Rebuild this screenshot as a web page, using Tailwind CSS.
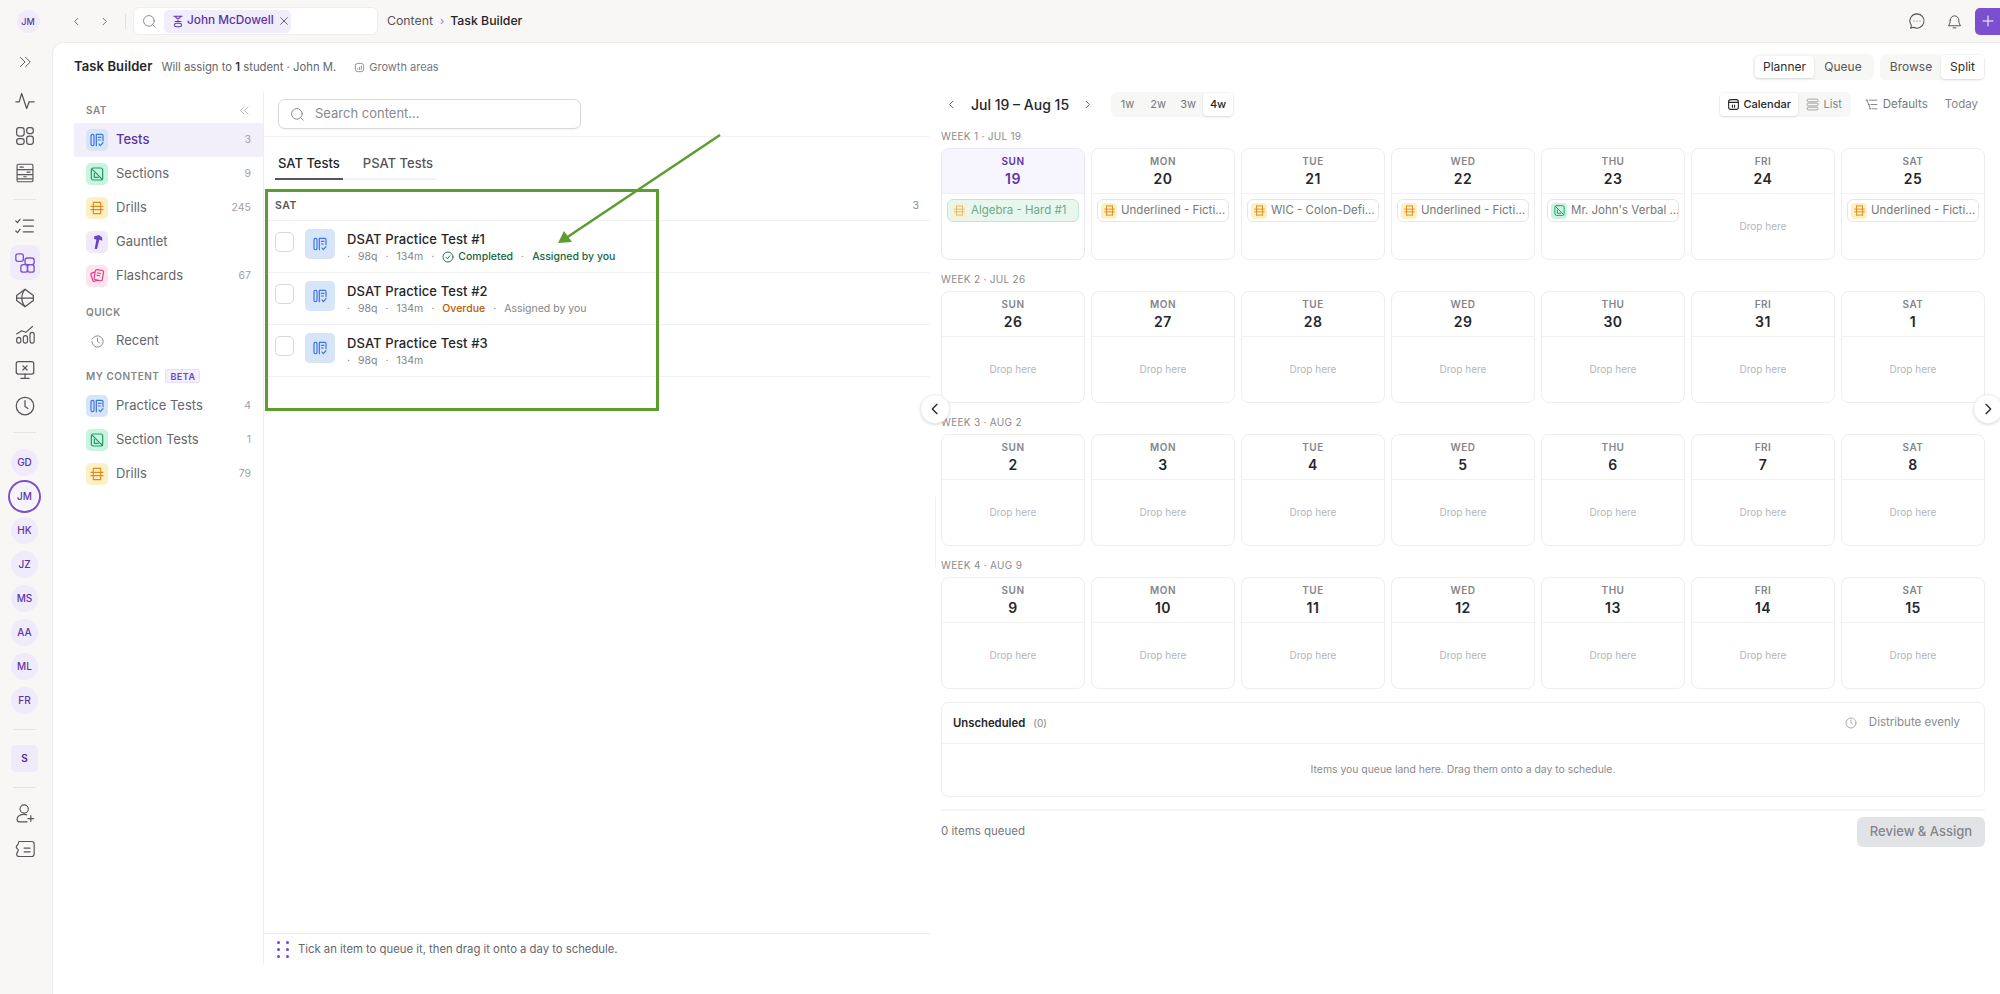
<!DOCTYPE html>
<html lang="en">
<head>
    <meta charset="UTF-8">
    <meta name="viewport" content="width=device-width, initial-scale=1.0">
    <title>Task Builder</title>
    <script src="https://cdn.jsdelivr.net/npm/@tailwindcss/browser@4"></script>
</head>
<body class="relative flex w-[2000px] h-[994px] overflow-hidden bg-[#f8f7f5] font-['Inter',sans-serif] text-[#1f1f22]">
    <!-- Icon sprites -->
    <svg class="hidden" xmlns="http://www.w3.org/2000/svg">
        <symbol id="i-tests" viewBox="0 0 24 24" fill="none" stroke="currentColor" stroke-width="1.8" stroke-linecap="round" stroke-linejoin="round">
            <rect x="3" y="3.5" width="4.5" height="17" rx="2.2"/>
            <path d="M11 20.5V3.5h8a2 2 0 0 1 2 2V13M14 8h4M14 12h3M15 18l2 2.5 4-4.5"/>
        </symbol>
        <symbol id="i-sections" viewBox="0 0 24 24" fill="none" stroke="currentColor" stroke-width="1.8" stroke-linecap="round" stroke-linejoin="round">
            <rect x="3.5" y="3" width="17" height="18" rx="3"/>
            <path d="M5 5l15 15M8 11v6h6"/>
        </symbol>
        <symbol id="i-drills" viewBox="0 0 24 24" fill="none" stroke="currentColor" stroke-width="1.7" stroke-linecap="round" stroke-linejoin="round">
            <path d="M6.500 3.500h11M6.500 20.500h11M6.500 3.500v17M17.500 3.500v17M3 9.500h18M3 14.500h18"/>
        </symbol>
        <symbol id="i-gauntlet" viewBox="0 0 24 24" fill="currentColor">
            <path d="M8 3.500l7-2 4.500 3.500.5 5-3-1-1.500-.5L12 22.500H8.500l2.500-14-3.500-1.500z"/>
        </symbol>
        <symbol id="i-cards" viewBox="0 0 24 24" fill="none" stroke="currentColor" stroke-width="1.7" stroke-linecap="round" stroke-linejoin="round">
            <path d="M8.500 6L4 7.700a2 2 0 0 0-1.200 2.500l3 8.500A2 2 0 0 0 8.300 20l5-1.800"/>
            <rect x="8.500" y="3" width="12.500" height="15.500" rx="2.500" transform="rotate(10 14.700 10.700)"/>
            <path d="M12.500 7.500l5 .8M12 11l4 .6"/>
        </symbol>
        <symbol id="i-search" viewBox="0 0 24 24" fill="none" stroke="currentColor" stroke-width="1.5" stroke-linecap="round">
            <circle cx="11" cy="11" r="8.500"/><path d="M17.500 17.500L21 21"/>
        </symbol>
        <symbol id="i-left" viewBox="0 0 24 24" fill="none" stroke="currentColor" stroke-width="2" stroke-linecap="round" stroke-linejoin="round"><path d="M15 5l-7 7 7 7"/></symbol>
        <symbol id="i-right" viewBox="0 0 24 24" fill="none" stroke="currentColor" stroke-width="2" stroke-linecap="round" stroke-linejoin="round"><path d="M9 5l7 7-7 7"/></symbol>
    </svg>

    <!-- Icon rail -->
    <aside class="flex flex-col items-center w-[52px] shrink-0 pr-[3px] text-[#55555a]">
        <div class="mt-[10px] ml-[7px] flex items-center justify-center w-[23px] h-[23px] rounded-full bg-[#f0ebfa] text-[9px] font-medium text-[#5b34a8]">JM</div>
        <svg class="mt-[21px] w-[14px] h-[16px]" viewBox="0 0 24 24" fill="none" stroke="currentColor" stroke-width="1.6" stroke-linecap="round" stroke-linejoin="round"><path d="M4 4l8 8-8 8M13 4l8 8-8 8"/></svg>
        <svg class="mt-[19px] w-[24px] h-[24px] p-[2px]" viewBox="0 0 24 24" fill="none" stroke="currentColor" stroke-width="1.5" stroke-linecap="round" stroke-linejoin="round"><path d="M1 13h4l3-10 6 18 3-8h6"/></svg>
        <svg class="mt-[11px] w-[24px] h-[24px] p-[2px]" viewBox="0 0 24 24" fill="none" stroke="currentColor" stroke-width="1.5"><rect x="2" y="2" width="9" height="10" rx="3"/><rect x="14" y="2" width="8" height="7" rx="3"/><rect x="14" y="12" width="8" height="10" rx="3"/><rect x="2" y="15" width="9" height="7" rx="3"/></svg>
        <svg class="mt-[13px] w-[24px] h-[24px] p-[2px]" viewBox="0 0 24 24" fill="none" stroke="currentColor" stroke-width="1.4" stroke-linejoin="round"><rect x="2.500" y="1.500" width="19" height="21" rx="1.500"/><path d="M2.500 8h19M2.500 14h19M2.500 19h19M5.500 5h5M14 11h4.500M10 16.500h4"/></svg>
        <div class="mt-[14px] w-[23px] h-px bg-[#e6e4e1]"></div>
        <svg class="mt-[14px] w-[24px] h-[24px] p-[2px]" viewBox="0 0 24 24" fill="none" stroke="currentColor" stroke-width="1.5" stroke-linecap="round" stroke-linejoin="round"><path d="M1 6l2 2 3-4M1 18l2 2 3-4M10 5h12M10 12h12M10 19h12"/></svg>
        <div class="mt-[7px] flex items-center justify-center w-[30px] h-[35px] rounded-[8px] bg-[#f0ebfa] text-[#7c4fd0]">
            <svg class="w-[20px] h-[20px]" viewBox="0 0 24 24" fill="none" stroke="currentColor" stroke-width="1.6"><rect x="1" y="1" width="9" height="9" rx="2.500"/><rect x="12" y="6" width="11" height="8" rx="3"/><rect x="7" y="14" width="8" height="9" rx="3"/><rect x="15" y="14" width="8" height="9" rx="3"/></svg>
        </div>
        <svg class="mt-[6px] w-[24px] h-[24px] p-[2px]" viewBox="0 0 24 24" fill="none" stroke="currentColor" stroke-width="1.5" stroke-linecap="round"><path d="M12 1.500L22 9v6l-10 7.500L2 15V9z" stroke-linejoin="round"/><path d="M2 12h20M12 2c-5 5-5 15 0 20"/></svg>
        <svg class="mt-[12px] w-[24px] h-[24px] p-[2px]" viewBox="0 0 24 24" fill="none" stroke="currentColor" stroke-width="1.4" stroke-linecap="round" stroke-linejoin="round"><rect x="2" y="16" width="5" height="7" rx="2.500"/><rect x="10" y="14" width="5" height="9" rx="2.500"/><rect x="18" y="10" width="5" height="13" rx="2.500"/><path d="M2 12l6-4 5 2 8-7"/></svg>
        <svg class="mt-[12px] w-[24px] h-[24px] p-[2px]" viewBox="0 0 24 24" fill="none" stroke="currentColor" stroke-width="1.5" stroke-linecap="round" stroke-linejoin="round"><rect x="1.500" y="2" width="21" height="15" rx="2.500"/><path d="M12 17v5M7 22h10M9.500 7l5 5M14.500 7l-5 5"/></svg>
        <svg class="mt-[12px] w-[24px] h-[24px] p-[2px]" viewBox="0 0 24 24" fill="none" stroke="currentColor" stroke-width="1.5" stroke-linecap="round" stroke-linejoin="round"><circle cx="12" cy="12" r="10.500"/><path d="M12 5.500v7l3.500 2.500"/></svg>
        <div class="mt-[14px] w-[23px] h-px bg-[#e6e4e1]"></div>
        <div class="mt-[16px] flex flex-col items-center gap-[7px] text-[10px] font-medium text-[#5b34a8]">
            <div class="flex items-center justify-center w-[27px] h-[27px] rounded-full bg-[#f0ebfa]">GD</div>
            <div class="flex items-center justify-center w-[27px] h-[27px] rounded-full bg-[#f6f3fc] shadow-[0_0_0_1px_#fff,0_0_0_3px_#7c4fd0]">JM</div>
            <div class="flex items-center justify-center w-[27px] h-[27px] rounded-full bg-[#f0ebfa]">HK</div>
            <div class="flex items-center justify-center w-[27px] h-[27px] rounded-full bg-[#f0ebfa]">JZ</div>
            <div class="flex items-center justify-center w-[27px] h-[27px] rounded-full bg-[#f0ebfa]">MS</div>
            <div class="flex items-center justify-center w-[27px] h-[27px] rounded-full bg-[#f0ebfa]">AA</div>
            <div class="flex items-center justify-center w-[27px] h-[27px] rounded-full bg-[#f0ebfa]">ML</div>
            <div class="flex items-center justify-center w-[27px] h-[27px] rounded-full bg-[#f0ebfa]">FR</div>
        </div>
        <div class="mt-[15px] w-[23px] h-px bg-[#e6e4e1]"></div>
        <div class="mt-[15px] flex items-center justify-center w-[27px] h-[27px] rounded-[5px] bg-[#f0ebfa] text-[10px] font-semibold text-[#4c2a9c]">S</div>
        <div class="mt-[15px] w-[23px] h-px bg-[#e6e4e1]"></div>
        <svg class="mt-[14px] w-[24px] h-[24px] p-[2px]" viewBox="0 0 24 24" fill="none" stroke="currentColor" stroke-width="1.4" stroke-linecap="round" stroke-linejoin="round"><circle cx="11" cy="6" r="5"/><path d="M14 13c-1-.3-2-.5-3-.5-5 0-8.500 2.500-8.500 5.500 0 2 1 3.500 3 3.500h9M19 14v7M15.500 17.500h7"/></svg>
        <svg class="mt-[11px] w-[24px] h-[24px] p-[2px]" viewBox="0 0 24 24" fill="none" stroke="currentColor" stroke-width="1.4" stroke-linecap="round" stroke-linejoin="round"><path d="M5 3h15a3 3 0 0 1 3 3v12a3 3 0 0 1-3 3H5a3 3 0 0 1-3-3c0-2 2-3 2-4.500S1.500 11.500 1.500 9.500 4 7.500 4 5.500C4 4 4 3 5 3zM11 11h7M11 15.500h7"/></svg>
    </aside>

    <div class="flex flex-col flex-1 min-w-0">
        <!-- Top bar -->
        <header class="flex items-center h-[42px] shrink-0 relative">
            <svg class="ml-[19px] w-[11px] h-[11px] text-[#66666b]"><use href="#i-left"/></svg>
            <svg class="ml-[17px] w-[11px] h-[11px] text-[#66666b]"><use href="#i-right"/></svg>
            <div class="ml-[15px] w-px h-[15px] bg-[#e1dfdb]"></div>
            <div class="ml-[7px] flex items-center w-[245px] h-[28px] rounded-[6px] bg-white border border-[#efedea]">
                <svg class="ml-[8px] shrink-0 w-[15px] h-[15px] text-[#85858a]"><use href="#i-search"/></svg>
                <div class="ml-[7px] flex items-center h-[23px] w-[127px] rounded-[5px] bg-[#f1edfb] text-[#5b34a8]">
                    <svg class="ml-[7px] shrink-0 w-[14px] h-[14px]" viewBox="0 0 24 24" fill="none" stroke="currentColor" stroke-width="1.8" stroke-linecap="round" stroke-linejoin="round"><path d="M5 4h14M8 4c0 5 8 5 8 0M12 10v3M7 13h10"/><rect x="6" y="16" width="12" height="6" rx="3"/></svg>
                    <span class="ml-[2px] text-[11.8px] font-medium whitespace-nowrap">John McDowell</span>
                    <svg class="ml-[5px] shrink-0 w-[10px] h-[10px] text-[#66507f]" viewBox="0 0 24 24" fill="none" stroke="currentColor" stroke-width="2.2" stroke-linecap="round"><path d="M4 4l16 16M20 4L4 20"/></svg>
                </div>
            </div>
            <span class="ml-[9px] text-[12.3px] text-[#55555a]">Content</span>
            <span class="ml-[7px] text-[11px] text-[#8a8a8e]">›</span>
            <span class="ml-[6px] text-[12.3px] font-medium text-[#26262a]">Task Builder</span>
            <div class="ml-auto flex items-center text-[#55555a]">
                <svg class="w-[18px] h-[18px]" viewBox="0 0 24 24" fill="none" stroke="currentColor" stroke-width="1.4" stroke-linecap="round" stroke-linejoin="round"><path d="M12 2.500a9.500 9.500 0 1 1-4.500 17.900L3.500 21.500l1-3.800A9.500 9.500 0 0 1 12 2.500z"/><path d="M8 12h.01M12 12h.01M16 12h.01"/></svg>
                <svg class="ml-[20px] w-[17px] h-[17px]" viewBox="0 0 24 24" fill="none" stroke="currentColor" stroke-width="1.4" stroke-linecap="round" stroke-linejoin="round"><path d="M6 10a6 6 0 0 1 12 0c0 5 2 7 2.500 8h-17C4 17 6 15 6 10zM10 21h4"/></svg>
                <div class="ml-[12px] flex items-center justify-center w-[25px] h-[27px] rounded-l-[5px] bg-[#7c4fd0] text-white">
                    <svg class="w-[12px] h-[12px]" viewBox="0 0 24 24" fill="none" stroke="currentColor" stroke-width="2" stroke-linecap="round"><path d="M12 2v20M2 12h20"/></svg>
                </div>
            </div>
        </header>

        <!-- Main panel -->
        <main class="flex flex-col flex-1 min-h-0 rounded-tl-[12px] bg-white border-t border-l border-[#eeecea] pb-[30px]">
            <div class="flex items-center h-[26px] mt-[11px] pl-[21px] pr-[15px] shrink-0">
                <h1 class="text-[13px] font-semibold tracking-[0.1px] text-[#26262a]">Task Builder</h1>
                <p class="ml-[9px] text-[11.3px] text-[#66666b]">Will assign to <span class="font-semibold text-[#333]">1</span> student · John M.</p>
                <svg class="ml-[18px] w-[11px] h-[11px] text-[#8a8a8e]" viewBox="0 0 24 24" fill="none" stroke="currentColor" stroke-width="2"><rect x="3" y="3" width="18" height="18" rx="5"/><path d="M8 17v-3M12 17v-6M16 17V8"/></svg>
                <span class="ml-[4px] text-[11px] text-[#77777c]">Growth areas</span>
                <div class="ml-auto flex items-center h-[26px] p-[2px] rounded-[6px] bg-[#f7f7f6] text-[12px]">
                    <span class="flex items-center justify-center w-[59px] h-full rounded-[4px] bg-white shadow-sm text-[#2c2c30]">Planner</span>
                    <span class="flex items-center justify-center w-[58px] h-full text-[#55555a]">Queue</span>
                </div>
                <div class="ml-[6px] flex items-center h-[26px] p-[1px] rounded-[6px] bg-[#f7f7f6] text-[12px]">
                    <span class="flex items-center justify-center w-[60px] h-full text-[#55555a]">Browse</span>
                    <span class="flex items-center justify-center w-[43px] h-full rounded-[4px] bg-white shadow-sm text-[#2c2c30]">Split</span>
                </div>
            </div>

            <div class="flex flex-1 min-h-0 mt-[12px] pl-[21px]">
                <!-- Content nav -->
                <nav class="w-[190px] shrink-0 border-r border-[#eeeeee] pt-[10px] text-[#66666b]">
                    <div class="flex items-center justify-between h-[16px] pl-[12px] pr-[13px] text-[10px] font-semibold tracking-[0.5px] text-[#85858a]">SAT
                        <svg class="w-[11px] h-[11px] text-[#a5a5aa]" viewBox="0 0 24 24" fill="none" stroke="currentColor" stroke-width="1.6" stroke-linecap="round" stroke-linejoin="round"><path d="M11 4l-8 8 8 8M20 4l-8 8 8 8"/></svg>
                    </div>
                    <div class="mt-[5px] flex items-center h-[34px] pl-[12px] pr-[12px] bg-[#f2effb] text-[13px] font-medium text-[#5b34a8]">
                        <span class="flex items-center justify-center w-[22px] h-[22px] rounded-[5px] bg-[#d6e5f8] text-[#3b74e8]"><svg class="w-[16px] h-[16px]"><use href="#i-tests"/></svg></span>
                        <span class="ml-[8px]">Tests</span><span class="ml-auto text-[10.5px] font-normal text-[#a0a0a5]">3</span>
                    </div>
                    <div class="flex items-center h-[34px] pl-[12px] pr-[12px] text-[13px]">
                        <span class="flex items-center justify-center w-[22px] h-[22px] rounded-[5px] bg-[#c9f5e0] text-[#1f9b6c]"><svg class="w-[16px] h-[16px]"><use href="#i-sections"/></svg></span>
                        <span class="ml-[8px]">Sections</span><span class="ml-auto text-[10.5px] text-[#a0a0a5]">9</span>
                    </div>
                    <div class="flex items-center h-[34px] pl-[12px] pr-[12px] text-[13px]">
                        <span class="flex items-center justify-center w-[22px] h-[22px] rounded-[5px] bg-[#fdf0c4] text-[#e08a1b]"><svg class="w-[16px] h-[16px]"><use href="#i-drills"/></svg></span>
                        <span class="ml-[8px]">Drills</span><span class="ml-auto text-[10.5px] text-[#a0a0a5]">245</span>
                    </div>
                    <div class="flex items-center h-[34px] pl-[12px] pr-[12px] text-[13px]">
                        <span class="flex items-center justify-center w-[22px] h-[22px] rounded-[5px] bg-[#efe9fb] text-[#6b46c1]"><svg class="w-[16px] h-[16px]"><use href="#i-gauntlet"/></svg></span>
                        <span class="ml-[8px]">Gauntlet</span>
                    </div>
                    <div class="flex items-center h-[34px] pl-[12px] pr-[12px] text-[13px]">
                        <span class="flex items-center justify-center w-[22px] h-[22px] rounded-[5px] bg-[#fde4ef] text-[#e8358a]"><svg class="w-[16px] h-[16px]"><use href="#i-cards"/></svg></span>
                        <span class="ml-[8px]">Flashcards</span><span class="ml-auto text-[10.5px] text-[#a0a0a5]">67</span>
                    </div>
                    <div class="mt-[11px] h-[16px] pl-[12px] text-[10px] font-semibold leading-[16px] tracking-[0.5px] text-[#85858a]">QUICK</div>
                    <div class="mt-[4px] flex items-center h-[34px] pl-[12px] pr-[12px] text-[13px]">
                        <span class="flex items-center justify-center w-[22px] h-[22px] text-[#85858a]"><svg class="w-[15px] h-[15px]" viewBox="0 0 24 24" fill="none" stroke="currentColor" stroke-width="1.5" stroke-linecap="round" stroke-linejoin="round"><path d="M3 12a9 9 0 1 0 3-6.700L3 8M12 7v5l3 2"/></svg></span>
                        <span class="ml-[8px]">Recent</span>
                    </div>
                    <div class="mt-[10px] flex items-center h-[16px] pl-[12px] text-[10px] font-semibold tracking-[0.5px] text-[#85858a]">MY CONTENT
                        <span class="ml-[6px] px-[4px] h-[14px] leading-[13px] rounded-[3px] border border-[#e6dff7] bg-[#f3effc] text-[9px] text-[#6b46c1]">BETA</span>
                    </div>
                    <div class="mt-[5px] flex items-center h-[34px] pl-[12px] pr-[12px] text-[13px]">
                        <span class="flex items-center justify-center w-[22px] h-[22px] rounded-[5px] bg-[#d6e5f8] text-[#3b74e8]"><svg class="w-[16px] h-[16px]"><use href="#i-tests"/></svg></span>
                        <span class="ml-[8px]">Practice Tests</span><span class="ml-auto text-[10.5px] text-[#a0a0a5]">4</span>
                    </div>
                    <div class="flex items-center h-[34px] pl-[12px] pr-[12px] text-[13px]">
                        <span class="flex items-center justify-center w-[22px] h-[22px] rounded-[5px] bg-[#c9f5e0] text-[#1f9b6c]"><svg class="w-[16px] h-[16px]"><use href="#i-sections"/></svg></span>
                        <span class="ml-[8px]">Section Tests</span><span class="ml-auto text-[10.5px] text-[#a0a0a5]">1</span>
                    </div>
                    <div class="flex items-center h-[34px] pl-[12px] pr-[12px] text-[13px]">
                        <span class="flex items-center justify-center w-[22px] h-[22px] rounded-[5px] bg-[#fdf0c4] text-[#e08a1b]"><svg class="w-[16px] h-[16px]"><use href="#i-drills"/></svg></span>
                        <span class="ml-[8px]">Drills</span><span class="ml-auto text-[10.5px] text-[#a0a0a5]">79</span>
                    </div>
                </nav>

                <!-- Content list -->
                <section class="flex flex-col w-[666px] shrink-0">
                    <div class="pt-[7px] pb-[7px] pl-[14px] border-b border-[#f1f1f1]">
                        <div class="flex items-center w-[303px] h-[30px] rounded-[7px] border border-[#d9d9dc] bg-white shadow-xs">
                            <svg class="ml-[11px] w-[15px] h-[15px] text-[#85858a]"><use href="#i-search"/></svg>
                            <span class="ml-[10px] text-[13px] text-[#8a8a8e]">Search content...</span>
                        </div>
                    </div>
                    <div class="ml-[11px] mt-[12px] flex w-[161px] gap-[20px] h-[31px] border-b-2 border-[#f3f3f3] text-[13px]">
                        <span class="h-[31px] px-[3px] border-b-2 border-[#55555a] font-medium text-[#26262a] leading-[28px]">SAT Tests</span>
                        <span class="text-[#55555a] font-medium leading-[28px]">PSAT Tests</span>
                    </div>
                    <div class="flex items-center justify-between h-[41px] pt-[11px] px-[11px] border-b border-[#f1f1f1] text-[10.5px] text-[#8a8a8e]">
                        <span class="font-semibold tracking-[0.5px] text-[#55555a]">SAT</span><span>3</span>
                    </div>
                    <div class="flex items-start h-[52px] pt-[8px] px-[11px] border-b border-[#f1f1f1]">
                        <span class="mt-[3px] w-[19px] h-[20px] rounded-[5px] border border-[#d9d9dc] bg-white"></span>
                        <span class="ml-[11px] flex items-center justify-center w-[30px] h-[30px] rounded-[5px] bg-[#d6e5f8] text-[#3b74e8]"><svg class="w-[16px] h-[16px]"><use href="#i-tests"/></svg></span>
                        <div class="ml-[12px]">
                            <div class="text-[13px] font-medium leading-[18px] mt-px tracking-[0.1px] text-[#26262a]">DSAT Practice Test #1</div>
                            <div class="flex items-center gap-[8px] mt-px text-[10.5px] leading-[16px] text-[#85858a]">
                                <span>·</span><span>98q</span><span>·</span><span>134m</span><span>·</span>
                                <span class="flex items-center gap-[4px] font-medium text-[#14683f]"><svg class="w-[12px] h-[12px]" viewBox="0 0 24 24" fill="none" stroke="currentColor" stroke-width="1.8" stroke-linecap="round" stroke-linejoin="round"><circle cx="12" cy="12" r="10"/><path d="M8 12.500l3 3 5-6"/></svg>Completed</span>
                                <span>·</span><span class="font-medium text-[#14683f]">Assigned by you</span>
                            </div>
                        </div>
                    </div>
                    <div class="flex items-start h-[52px] pt-[8px] px-[11px] border-b border-[#f1f1f1]">
                        <span class="mt-[3px] w-[19px] h-[20px] rounded-[5px] border border-[#d9d9dc] bg-white"></span>
                        <span class="ml-[11px] flex items-center justify-center w-[30px] h-[30px] rounded-[5px] bg-[#d6e5f8] text-[#3b74e8]"><svg class="w-[16px] h-[16px]"><use href="#i-tests"/></svg></span>
                        <div class="ml-[12px]">
                            <div class="text-[13px] font-medium leading-[18px] mt-px tracking-[0.1px] text-[#26262a]">DSAT Practice Test #2</div>
                            <div class="flex items-center gap-[8px] mt-px text-[10.5px] leading-[16px] text-[#85858a]">
                                <span>·</span><span>98q</span><span>·</span><span>134m</span><span>·</span>
                                <span class="font-medium text-[#b85c00]">Overdue</span>
                                <span>·</span><span>Assigned by you</span>
                            </div>
                        </div>
                    </div>
                    <div class="flex items-start h-[52px] pt-[8px] px-[11px] border-b border-[#f1f1f1]">
                        <span class="mt-[3px] w-[19px] h-[20px] rounded-[5px] border border-[#d9d9dc] bg-white"></span>
                        <span class="ml-[11px] flex items-center justify-center w-[30px] h-[30px] rounded-[5px] bg-[#d6e5f8] text-[#3b74e8]"><svg class="w-[16px] h-[16px]"><use href="#i-tests"/></svg></span>
                        <div class="ml-[12px]">
                            <div class="text-[13px] font-medium leading-[18px] mt-px tracking-[0.1px] text-[#26262a]">DSAT Practice Test #3</div>
                            <div class="flex items-center gap-[8px] mt-px text-[10.5px] leading-[16px] text-[#85858a]">
                                <span>·</span><span>98q</span><span>·</span><span>134m</span>
                            </div>
                        </div>
                    </div>
                    <div class="mt-auto flex items-center h-[31px] border-t border-[#eeeeee] pl-[13px] text-[11.3px] text-[#66666b]">
                        <span class="grid grid-cols-2 gap-x-[7px] gap-y-[4px] w-[10px]">
                            <i class="w-[3px] h-[3px] rounded-full bg-[#7c3aed]"></i><i class="w-[3px] h-[3px] rounded-full bg-[#7c3aed]"></i>
                            <i class="w-[3px] h-[3px] rounded-full bg-[#7c3aed]"></i><i class="w-[3px] h-[3px] rounded-full bg-[#7c3aed]"></i>
                            <i class="w-[3px] h-[3px] rounded-full bg-[#7c3aed]"></i><i class="w-[3px] h-[3px] rounded-full bg-[#7c3aed]"></i>
                        </span>
                        <span class="ml-[11px]">Tick an item to queue it, then drag it onto a day to schedule.</span>
                    </div>
                </section>

                <!-- Calendar -->
                <section class="flex-1 min-w-0 pl-[11px] pr-[15px]">
                    <div class="flex items-center h-[25px]">
                        <svg class="ml-[5px] w-[11px] h-[11px] text-[#55555a]"><use href="#i-left"/></svg>
                        <span class="ml-[14px] text-[14px] font-medium text-[#26262a] whitespace-nowrap">Jul 19 – Aug 15</span>
                        <svg class="ml-[13px] w-[11px] h-[11px] text-[#55555a]"><use href="#i-right"/></svg>
                        <div class="ml-[18px] flex items-center h-[25px] p-[1px] rounded-[6px] bg-[#f7f7f6] text-[11px] text-[#77777c]">
                            <span class="flex items-center justify-center w-[31px] h-full">1w</span>
                            <span class="flex items-center justify-center w-[30px] h-full">2w</span>
                            <span class="flex items-center justify-center w-[30px] h-full">3w</span>
                            <span class="flex items-center justify-center w-[30px] h-full rounded-[4px] bg-white shadow-sm font-medium text-[#26262a]">4w</span>
                        </div>
                        <div class="ml-auto flex items-center h-[25px] p-[1px] rounded-[6px] bg-[#f7f7f6] text-[11px]">
                            <span class="flex items-center justify-center gap-[4px] w-[78px] h-full rounded-[4px] bg-white shadow-sm font-medium text-[#26262a]"><svg class="w-[13px] h-[13px]" viewBox="0 0 24 24" fill="none" stroke="currentColor" stroke-width="2" stroke-linecap="round"><rect x="3" y="3" width="18" height="18" rx="4"/><path d="M3 8h18M10 13v4M14 13v4"/></svg>Calendar</span>
                            <span class="flex items-center justify-center gap-[5px] w-[52px] h-full text-[#85858a]"><svg class="w-[13px] h-[13px] text-[#9a9a9e]" viewBox="0 0 24 24" fill="none" stroke="currentColor" stroke-width="1.6"><rect x="2" y="2" width="20" height="5" rx="2"/><rect x="2" y="9.500" width="20" height="5" rx="2"/><rect x="2" y="17" width="20" height="5" rx="2"/></svg>List</span>
                        </div>
                        <span class="ml-[14px] flex items-center gap-[5px] text-[11.5px] text-[#77777c]"><svg class="w-[13px] h-[13px]" viewBox="0 0 24 24" fill="none" stroke="currentColor" stroke-width="1.6" stroke-linecap="round"><path d="M2 4h3M8 4h14M6 12h2M11 12h11M8 20h2M13 20h9M3 4l4 8 3 8"/></svg>Defaults</span>
                        <span class="ml-[17px] mr-[7px] text-[11.5px] text-[#85858a]">Today</span>
                    </div>

                    <div id="weeks"></div>

                    <div class="mt-[13px] h-[95px] rounded-[7px] border border-[#eeeeee]">
                        <div class="flex items-center h-[41px] pl-[11px] pr-[24px] border-b border-[#f1f1f1]">
                            <span class="text-[11.3px] font-semibold text-[#26262a]">Unscheduled</span>
                            <span class="ml-[8px] text-[10px] text-[#85858a]">(0)</span>
                            <svg class="ml-auto w-[12px] h-[12px] text-[#9a9a9e]" viewBox="0 0 24 24" fill="none" stroke="currentColor" stroke-width="1.6" stroke-linecap="round"><circle cx="12" cy="12" r="10"/><path d="M12 6v6l3 2"/></svg>
                            <span class="ml-[12px] text-[11.5px] text-[#8a8a8e]">Distribute evenly</span>
                        </div>
                        <div class="flex items-center justify-center h-[52px] text-[10.4px] text-[#8a8a8e]">Items you queue land here. Drag them onto a day to schedule.</div>
                    </div>
                    <div class="mt-[12px] h-[2px] bg-[#f6f6f6]"></div>
                    <div class="mt-[6px] flex items-center justify-between">
                        <span class="text-[11.5px] text-[#77777c]">0 items queued</span>
                        <span class="flex items-center justify-center w-[128px] h-[30px] rounded-[6px] bg-[#e2e3e7] text-[13px] font-medium text-[#85858a]">Review &amp; Assign</span>
                    </div>
                </section>
            </div>
        </main>
    </div>

    <!-- Annotation over the list -->
    <div class="absolute left-[265px] top-[189px] w-[394px] h-[222px] border-[3px] border-[#5d9c2f] pointer-events-none"></div>
    <svg class="absolute left-0 top-0 w-[2000px] h-[994px] pointer-events-none" viewBox="0 0 2000 994">
        <path d="M720 135L566 238" stroke="#5d9c2f" stroke-width="2.5" fill="none"/>
        <path d="M558 243L564 231L572 242z" fill="#5d9c2f"/>
    </svg>

    <!-- Calendar paging buttons -->
    <div class="absolute left-[935px] top-[497px] w-px h-[70px] bg-[#f1f1f1]"></div>
    <div class="absolute left-[920px] top-[394px] flex items-center justify-center w-[30px] h-[30px] rounded-full bg-white border border-[#eeeeee] shadow-sm text-[#26262a]"><svg class="w-[16px] h-[16px]"><use href="#i-left"/></svg></div>
    <div class="absolute left-[1973px] top-[394px] flex items-center justify-center w-[30px] h-[30px] rounded-full bg-white border border-[#eeeeee] shadow-sm text-[#26262a]"><svg class="w-[16px] h-[16px]"><use href="#i-right"/></svg></div>

    <script>
        // Four weeks of day cards, items keyed by the week-1 day
        const dayNames = ['SUN', 'MON', 'TUE', 'WED', 'THU', 'FRI', 'SAT'];
        const drillIcon = '<span class="flex items-center justify-center shrink-0 w-[16px] h-[16px] rounded-[4px] bg-[#fdf0c4] text-[#e08a1b]"><svg class="w-[13px] h-[13px]"><use href="#i-drills"/></svg></span>';
        const sectionIcon = '<span class="flex items-center justify-center shrink-0 w-[16px] h-[16px] rounded-[4px] bg-[#c9f5e0] text-[#1f9b6c]"><svg class="w-[13px] h-[13px]"><use href="#i-sections"/></svg></span>';
        const pill = (icon, label) => '<div class="flex items-center gap-[4px] h-[23px] px-[3px] rounded-[6px] border border-[#e6e6e8] bg-white text-[11.5px] text-[#77777c] whitespace-nowrap overflow-hidden">' + icon + '<span>' + label + '</span></div>';
        const weekOneItems = [
            '<div class="flex items-center gap-[4px] h-[23px] px-[3px] rounded-[6px] border border-[#bfe8cd] bg-[#e8f7ee] text-[11.5px] text-[#6fa888] whitespace-nowrap overflow-hidden"><span class="opacity-60">' + drillIcon + '</span><span>Algebra - Hard #1</span></div>',
            pill(drillIcon, 'Underlined - Ficti…'),
            pill(drillIcon, 'WIC - Colon-Defi…'),
            pill(drillIcon, 'Underlined - Ficti…'),
            pill(sectionIcon, "Mr. John's Verbal …"),
            null,
            pill(drillIcon, 'Underlined - Ficti…'),
        ];
        const weeks = [
            ['WEEK 1 · JUL 19', [19, 20, 21, 22, 23, 24, 25]],
            ['WEEK 2 · JUL 26', [26, 27, 28, 29, 30, 31, 1]],
            ['WEEK 3 · AUG 2', [2, 3, 4, 5, 6, 7, 8]],
            ['WEEK 4 · AUG 9', [9, 10, 11, 12, 13, 14, 15]],
        ];
        const dayCard = (name, num, item, today) =>
            '<div class="flex flex-col w-[144px] h-[112px] rounded-[8px] border overflow-hidden ' + (today ? 'border-[#ebe6f8]' : 'border-[#eeeeee]') + '">' +
                '<div class="flex flex-col items-center h-[45px] pt-[6px] shrink-0 border-b ' + (today ? 'border-[#f0edf9] bg-[#f7f5fd] text-[#5b34a8]' : 'border-[#f1f1f1] text-[#26262a]') + '">' +
                    '<span class="text-[10px] leading-[13px] font-semibold tracking-[0.5px] ' + (today ? 'text-[#5b34a8]' : 'text-[#85858a]') + '">' + name + '</span>' +
                    '<span class="mt-[1px] text-[14px] leading-[19px] font-semibold tracking-[0.5px]">' + num + '</span>' +
                '</div>' +
                (item
                    ? '<div class="px-[5px] pt-[5px]">' + item + '</div>'
                    : '<div class="flex flex-1 items-center justify-center text-[10px] text-[#b5b5b8]">Drop here</div>') +
            '</div>';
        document.getElementById('weeks').innerHTML = weeks.map(([label, days], w) =>
            '<div class="mt-[13px] h-[13px] text-[10px] leading-[13px] tracking-[0.3px] text-[#8a8a8e]">' + label + '</div>' +
            '<div class="mt-[5px] flex gap-[6px]">' +
                days.map((num, d) => dayCard(dayNames[d], num, w === 0 ? weekOneItems[d] : null, w === 0 && d === 0)).join('') +
            '</div>'
        ).join('');
    </script>
</body>
</html>
